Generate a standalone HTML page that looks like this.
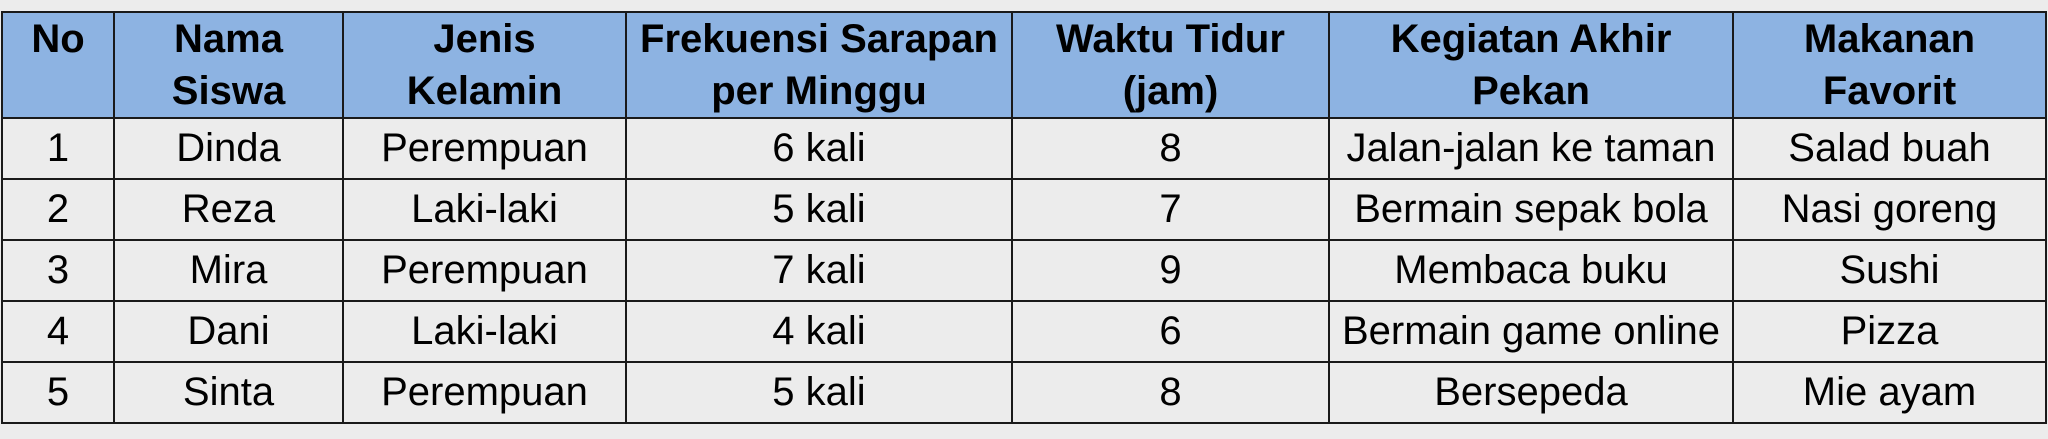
<!DOCTYPE html>
<html><head><style>
html,body{margin:0;padding:0;background:#ececec;width:2048px;height:439px;overflow:hidden}
table{position:absolute;left:1px;top:11px;border-collapse:collapse;table-layout:fixed;font-family:"Liberation Sans",Arial,sans-serif;font-size:40px;color:#000}
td,th{border:2.5px solid #1a1a1a;text-align:center;padding:0;white-space:nowrap;overflow:hidden}
th{background:#8db3e2;font-weight:bold;height:101px;line-height:52px;vertical-align:top;padding-top:0;box-sizing:border-box}
td{height:59px;line-height:59px;background:#ececec}
</style></head><body>
<table>
<colgroup><col style="width:112px"><col style="width:229px"><col style="width:283px"><col style="width:386px"><col style="width:317px"><col style="width:404px"><col style="width:313px"></colgroup>
<tr><th>No</th><th>Nama<br>Siswa</th><th>Jenis<br>Kelamin</th><th>Frekuensi Sarapan<br>per Minggu</th><th>Waktu Tidur<br>(jam)</th><th>Kegiatan Akhir<br>Pekan</th><th>Makanan<br>Favorit</th></tr>
<tr><td>1</td><td>Dinda</td><td>Perempuan</td><td>6 kali</td><td>8</td><td>Jalan-jalan ke taman</td><td>Salad buah</td></tr>
<tr><td>2</td><td>Reza</td><td>Laki-laki</td><td>5 kali</td><td>7</td><td>Bermain sepak bola</td><td>Nasi goreng</td></tr>
<tr><td>3</td><td>Mira</td><td>Perempuan</td><td>7 kali</td><td>9</td><td>Membaca buku</td><td>Sushi</td></tr>
<tr><td>4</td><td>Dani</td><td>Laki-laki</td><td>4 kali</td><td>6</td><td>Bermain game online</td><td>Pizza</td></tr>
<tr><td>5</td><td>Sinta</td><td>Perempuan</td><td>5 kali</td><td>8</td><td>Bersepeda</td><td>Mie ayam</td></tr>
</table>
</body></html>
